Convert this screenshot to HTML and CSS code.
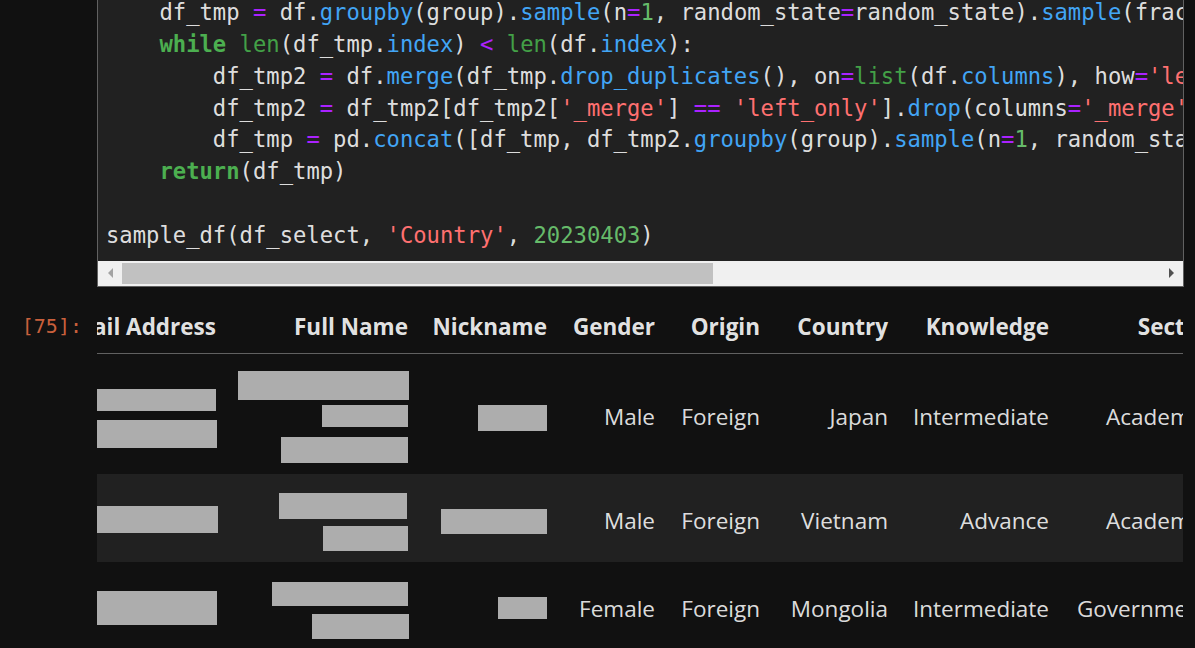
FILE: index.html
```html
<!DOCTYPE html>
<html lang="en">
<head>
<meta charset="utf-8">
<title>Notebook cell 75</title>
<link rel="stylesheet" href="styles.css">
</head>
<body>
<div class="notebook">
  <div class="cell-input">
    <div class="prompt"></div>
    <div class="editor">
      <div class="code">
        <div class="ln">    df_tmp <span class="o">=</span> df.<span class="p">groupby</span>(group).<span class="p">sample</span>(n<span class="o">=</span><span class="n">1</span>, random_state<span class="o">=</span>random_state).<span class="p">sample</span>(frac<span class="o">=</span><span class="n">1</span>, random_state<span class="o">=</span>random_state)</div>
        <div class="ln">    <span class="k">while</span> <span class="b">len</span>(df_tmp.<span class="p">index</span>) <span class="o">&lt;</span> <span class="b">len</span>(df.<span class="p">index</span>):</div>
        <div class="ln">        df_tmp2 <span class="o">=</span> df.<span class="p">merge</span>(df_tmp.<span class="p">drop_duplicates</span>(), on<span class="o">=</span><span class="b">list</span>(df.<span class="p">columns</span>), how<span class="o">=</span><span class="s">'left'</span>, indicator<span class="o">=</span><span class="k">True</span>)</div>
        <div class="ln">        df_tmp2 <span class="o">=</span> df_tmp2[df_tmp2[<span class="s">'_merge'</span>] <span class="o">==</span> <span class="s">'left_only'</span>].<span class="p">drop</span>(columns<span class="o">=</span><span class="s">'_merge'</span>)</div>
        <div class="ln">        df_tmp <span class="o">=</span> pd.<span class="p">concat</span>([df_tmp, df_tmp2.<span class="p">groupby</span>(group).<span class="p">sample</span>(n<span class="o">=</span><span class="n">1</span>, random_state<span class="o">=</span>random_state)])</div>
        <div class="ln">    <span class="k">return</span>(df_tmp)</div>
        <div class="ln"> </div>
        <div class="ln">sample_df(df_select, <span class="s">'Country'</span>, <span class="n">20230403</span>)</div>
      </div>
      <div class="hscroll">
        <div class="sb-btn"><span class="arrow-left"></span></div>
        <div class="sb-track"><div class="sb-thumb"></div></div>
        <div class="sb-btn"><span class="arrow-right"></span></div>
      </div>
    </div>
  </div>

  <div class="cell-output">
    <div class="prompt out">[75]:</div>
    <div class="output">
      <table class="frame">
        <colgroup>
          <col class="c-email"><col class="c-full"><col class="c-nick"><col class="c-gender">
          <col class="c-origin"><col class="c-country"><col class="c-know"><col class="c-sector">
        </colgroup>
        <thead>
          <tr>
            <th>Email Address</th><th>Full Name</th><th>Nickname</th><th>Gender</th>
            <th>Origin</th><th>Country</th><th>Knowledge</th><th>Sector</th>
          </tr>
        </thead>
        <tbody>
          <tr class="tall">
            <td class="red"><div class="stack"><span class="bar r1e1"></span><span class="bar r1e2"></span></div></td>
            <td class="red"><div class="stack"><span class="bar r1f1"></span><span class="bar r1f2"></span><span class="bar r1f3"></span></div></td>
            <td class="red"><div class="stack"><span class="bar r1n1"></span></div></td>
            <td>Male</td><td>Foreign</td><td>Japan</td><td>Intermediate</td><td>Academia</td>
          </tr>
          <tr>
            <td class="red"><div class="stack"><span class="bar r2e1"></span></div></td>
            <td class="red"><div class="stack"><span class="bar r2f1"></span><span class="bar r2f2"></span></div></td>
            <td class="red"><div class="stack"><span class="bar r2n1"></span></div></td>
            <td>Male</td><td>Foreign</td><td>Vietnam</td><td>Advance</td><td>Academia</td>
          </tr>
          <tr>
            <td class="red"><div class="stack"><span class="bar r3e1"></span></div></td>
            <td class="red"><div class="stack"><span class="bar r3f1"></span><span class="bar r3f2"></span></div></td>
            <td class="red"><div class="stack"><span class="bar r3n1"></span></div></td>
            <td>Female</td><td>Foreign</td><td>Mongolia</td><td>Intermediate</td><td>Government</td>
          </tr>
        </tbody>
      </table>
    </div>
  </div>
</div>
</body>
</html>
```

FILE: styles.css
```css
html, body {
  margin: 0;
  padding: 0;
  background: #111111;
  overflow: hidden;
}

.notebook {
  width: 1195px;
  height: 648px;
  overflow: hidden;
}

.cell-input,
.cell-output {
  display: flex;
  align-items: flex-start;
}

.cell-input {
  margin-top: -7px;
}

.prompt {
  flex: none;
  width: 97px;
  box-sizing: border-box;
}

.prompt.out {
  margin-top: 13px;
  padding-right: 15px;
  text-align: right;
  font-family: "DejaVu Sans Mono", monospace;
  font-size: 20px;
  line-height: 53px;
  color: #c9603c;
}

/* ---------- editor ---------- */
.editor {
  flex: none;
  width: 1087px;
  box-sizing: border-box;
  border: 1px solid #616161;
  border-top: 0;
  background: #212121;
}

.code {
  padding: 4px 8px 9px 8px;
  overflow: hidden;
  font-family: "DejaVu Sans Mono", monospace;
  font-size: 22.2px;
  line-height: 31.86px;
  color: rgba(255, 255, 255, 0.87);
}

.code .ln {
  white-space: pre;
  height: 31.86px;
}

.code .k { color: #4caf50; font-weight: bold; }
.code .b { color: #43a047; }
.code .n { color: #66bb6a; }
.code .o { color: #aa22ff; }
.code .p { color: #42a5f5; }
.code .s { color: #ff7070; }

.hscroll {
  display: flex;
  align-items: center;
  height: 25px;
  background: #f0f0f0;
}

.sb-btn {
  flex: none;
  width: 24px;
  height: 25px;
  display: flex;
  align-items: center;
  justify-content: center;
}

.arrow-left {
  width: 0;
  height: 0;
  border-top: 5px solid transparent;
  border-bottom: 5px solid transparent;
  border-right: 5px solid #a3a3a3;
}

.arrow-right {
  width: 0;
  height: 0;
  border-top: 5px solid transparent;
  border-bottom: 5px solid transparent;
  border-left: 5px solid #505050;
}

.sb-track {
  flex: 1;
  height: 21px;
}

.sb-thumb {
  width: 591px;
  height: 21px;
  background: #c1c1c1;
}

/* ---------- output table ---------- */
.output {
  flex: none;
  width: 1086px;
  overflow: hidden;
  padding-top: 13px;
}

.frame {
  margin-left: -62px;
  width: 1185px;
  table-layout: fixed;
  border-collapse: separate;
  border-spacing: 0;
  font-family: "Open Sans", sans-serif;
  font-size: 22.5px;
  color: rgba(255, 255, 255, 0.87);
}

.c-email { width: 192px; }
.c-full { width: 192px; }
.c-nick { width: 139px; }
.c-gender { width: 108px; }
.c-origin { width: 105px; }
.c-country { width: 128px; }
.c-know { width: 161px; }
.c-sector { width: 160px; }

.frame th,
.frame td {
  padding: 0 11px;
  text-align: right;
  white-space: nowrap;
}

.frame th {
  height: 53px;
  font-weight: 700;
  color: rgba(255, 255, 255, 0.9);
  border-bottom: 1px solid #616161;
  vertical-align: middle;
}

.frame td {
  height: 83px;
  padding-top: 5px;
  vertical-align: middle;
}

.frame tr.tall td {
  height: 115px;
}

.frame tbody tr:nth-child(even) td {
  background: #212121;
}

.frame td.red {
  vertical-align: top;
  padding-top: 0;
  height: 88px;
}

.frame tr.tall td.red {
  height: 120px;
}

.stack {
  display: flex;
  flex-direction: column;
  align-items: flex-end;
}

.bar {
  display: block;
  background: #adadad;
}

/* redaction bars: width / height / offset from row top / offset from text edge */
.r1e1 { width: 123px; height: 22px; margin-top: 35px; }
.r1e2 { width: 123px; height: 28px; margin-top: 9px; margin-right: -1px; }
.r1f1 { width: 171px; height: 29px; margin-top: 17px; margin-right: -1px; }
.r1f2 { width: 86px; height: 22px; margin-top: 5px; }
.r1f3 { width: 127px; height: 26px; margin-top: 10px; }
.r1n1 { width: 69px; height: 26px; margin-top: 51px; }

.r2e1 { width: 124px; height: 27px; margin-top: 32px; margin-right: -2px; }
.r2f1 { width: 128px; height: 26px; margin-top: 19px; margin-right: 1px; }
.r2f2 { width: 85px; height: 25px; margin-top: 7px; }
.r2n1 { width: 106px; height: 25px; margin-top: 35px; }

.r3e1 { width: 125px; height: 34px; margin-top: 29px; margin-right: -1px; }
.r3f1 { width: 136px; height: 24px; margin-top: 20px; }
.r3f2 { width: 97px; height: 25px; margin-top: 8px; margin-right: -1px; }
.r3n1 { width: 49px; height: 22px; margin-top: 35px; }
```
